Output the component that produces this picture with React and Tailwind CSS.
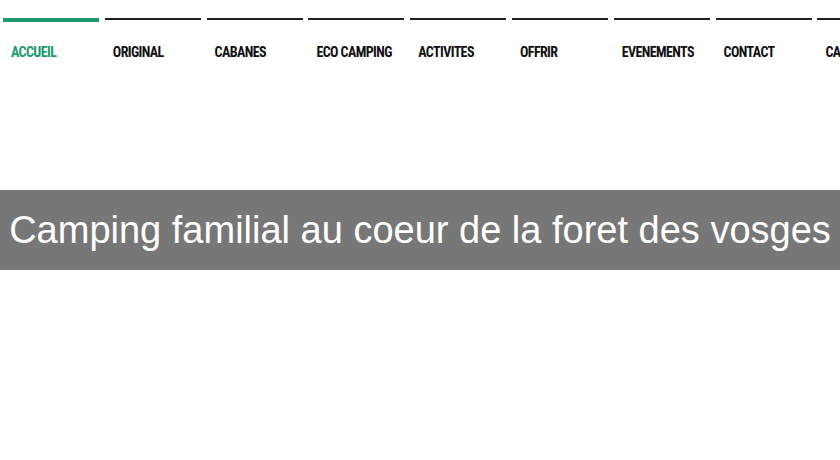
const items = ["ACCUEIL", "ORIGINAL", "CABANES", "ECO CAMPING", "ACTIVITES", "OFFRIR", "EVENEMENTS", "CONTACT", "CARTE"];

export default function App() {
  return (
    <div className="w-[840px] h-[460px] bg-white overflow-hidden">
      <ul className="flex pt-[18px] pl-[3px] whitespace-nowrap">
        {items.map((it, i) => (
          <li
            key={it}
            className={
              "shrink-0 w-[96px] mr-[5.8px] pl-[8px] font-bold text-[14px] tracking-[-0.6px] " +
              (i === 0
                ? "border-t-[4px] border-[#1b9a6e] text-[#1b9a6e] pt-[20px]"
                : "border-t-[2px] border-[#222] text-[#111] pt-[22px]")
            }
            style={{ fontFamily: '"Roboto Condensed", "Liberation Sans Narrow", "Liberation Sans", sans-serif' }}
          >
            {it}
          </li>
        ))}
      </ul>
      <div className="mt-[127px] h-[80px] bg-[#777777] flex items-center justify-center overflow-hidden">
        <h1
          className="text-white text-[38px] whitespace-nowrap"
          style={{ fontFamily: '"Liberation Sans", Arial, sans-serif' }}
        >
          Camping familial au coeur de la foret des vosges
        </h1>
      </div>
    </div>
  );
}
